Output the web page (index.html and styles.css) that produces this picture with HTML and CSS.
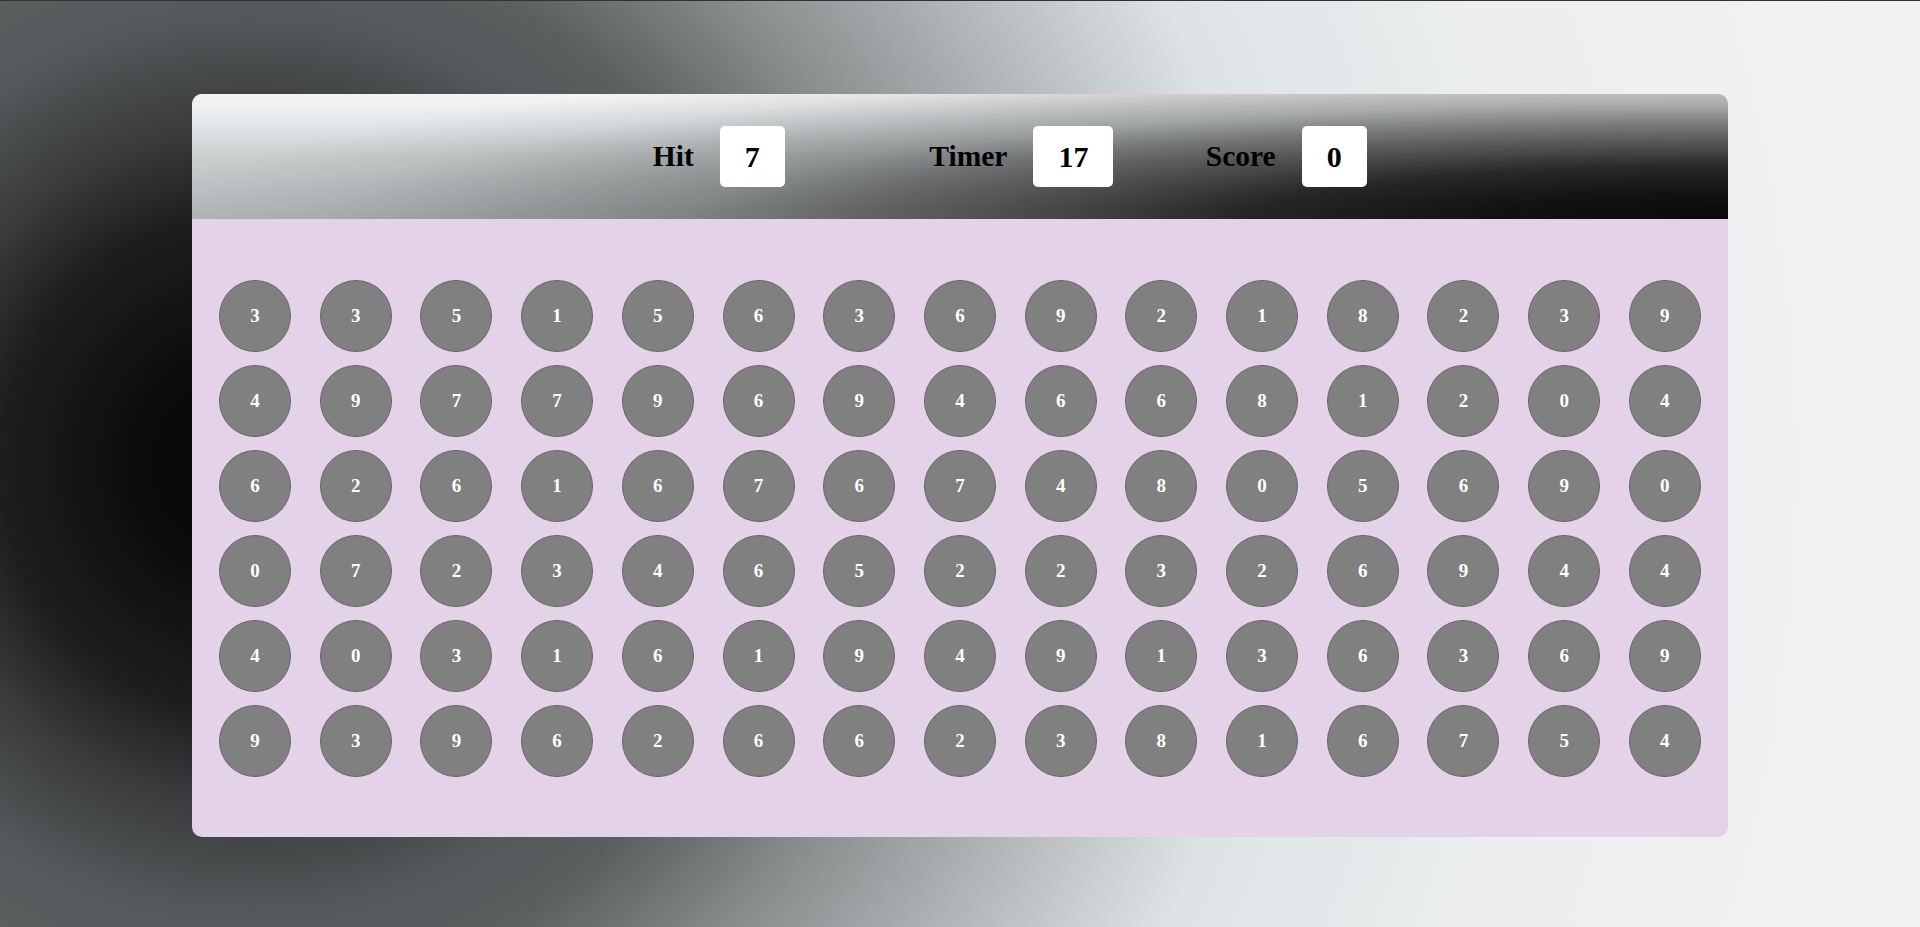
FILE: index.html
```html
<!DOCTYPE html>
<html lang="en">
<head>
<meta charset="UTF-8">
<title>Bubble Game</title>
<link rel="stylesheet" href="styles.css">
</head>
<body>
<main class="main">
  <section class="panel">
    <header class="ptop">
      <div class="elem"><h2 class="label">Hit</h2><div class="box">7</div></div>
      <div class="elem"><h2 class="label">Timer</h2><div class="box">17</div></div>
      <div class="elem"><h2 class="label">Score</h2><div class="box">0</div></div>
    </header>
    <div class="pbtm">
      <div class="bubble">3</div><div class="bubble">3</div><div class="bubble">5</div><div class="bubble">1</div><div class="bubble">5</div><div class="bubble">6</div><div class="bubble">3</div><div class="bubble">6</div><div class="bubble">9</div><div class="bubble">2</div><div class="bubble">1</div><div class="bubble">8</div><div class="bubble">2</div><div class="bubble">3</div><div class="bubble">9</div>
      <div class="bubble">4</div><div class="bubble">9</div><div class="bubble">7</div><div class="bubble">7</div><div class="bubble">9</div><div class="bubble">6</div><div class="bubble">9</div><div class="bubble">4</div><div class="bubble">6</div><div class="bubble">6</div><div class="bubble">8</div><div class="bubble">1</div><div class="bubble">2</div><div class="bubble">0</div><div class="bubble">4</div>
      <div class="bubble">6</div><div class="bubble">2</div><div class="bubble">6</div><div class="bubble">1</div><div class="bubble">6</div><div class="bubble">7</div><div class="bubble">6</div><div class="bubble">7</div><div class="bubble">4</div><div class="bubble">8</div><div class="bubble">0</div><div class="bubble">5</div><div class="bubble">6</div><div class="bubble">9</div><div class="bubble">0</div>
      <div class="bubble">0</div><div class="bubble">7</div><div class="bubble">2</div><div class="bubble">3</div><div class="bubble">4</div><div class="bubble">6</div><div class="bubble">5</div><div class="bubble">2</div><div class="bubble">2</div><div class="bubble">3</div><div class="bubble">2</div><div class="bubble">6</div><div class="bubble">9</div><div class="bubble">4</div><div class="bubble">4</div>
      <div class="bubble">4</div><div class="bubble">0</div><div class="bubble">3</div><div class="bubble">1</div><div class="bubble">6</div><div class="bubble">1</div><div class="bubble">9</div><div class="bubble">4</div><div class="bubble">9</div><div class="bubble">1</div><div class="bubble">3</div><div class="bubble">6</div><div class="bubble">3</div><div class="bubble">6</div><div class="bubble">9</div>
      <div class="bubble">9</div><div class="bubble">3</div><div class="bubble">9</div><div class="bubble">6</div><div class="bubble">2</div><div class="bubble">6</div><div class="bubble">6</div><div class="bubble">2</div><div class="bubble">3</div><div class="bubble">8</div><div class="bubble">1</div><div class="bubble">6</div><div class="bubble">7</div><div class="bubble">5</div><div class="bubble">4</div>
    </div>
  </section>
</main>
</body>
</html>
```
FILE: styles.css
```css
* {
  box-sizing: border-box;
  margin: 0;
  padding: 0;
}

html, body {
  width: 100%;
  height: 100%;
  overflow: hidden;
}

body {
  font-family: "Liberation Serif", "Times New Roman", serif;
}

.main {
  width: 100%;
  height: 927px;
  border-top: 1px solid #303336;
  padding-top: 93px;
  display: flex;
  justify-content: center;
  align-items: flex-start;
  background: radial-gradient(circle 1750px at 250px 50%,
    #080808 0px,
    #0a0a0a 95px,
    #1e1e1e 250px,
    #37393a 332px,
    #55585a 446px,
    #5c5f60 526px,
    #8a8d8e 670px,
    #b8bcbe 864px,
    #dde3e5 1024px,
    #eceeef 1304px,
    #f2f2f2 1700px);
}

.panel {
  width: 80%;
  height: 743px;
  border-radius: 10px;
  overflow: hidden;
  background: #e3d2e8;
  display: flex;
  flex-direction: column;
}

.ptop {
  height: 125px;
  flex: none;
  display: flex;
  align-items: center;
  padding-left: 30%;
  background-image:
    radial-gradient(ellipse 2000px 220px at 100% 100%,
      #0d0d0d 0%,
      #191919 12%,
      #333333 24%,
      #5a5a5a 32%,
      #8c8c8c 44%,
      #b5b5b5 52%,
      #eeeeee 70%,
      #ffffff 80%),
    linear-gradient(to bottom, #f5f5f5 0%, #e4e8ea 22%, #cbcfd0 50%, #b3b7b9 100%);
  background-blend-mode: multiply;
}

.elem {
  width: 276.5px;
  flex: none;
  display: flex;
  align-items: center;
  gap: 26px;
}

.label {
  font-size: 29.5px;
  font-weight: 700;
  color: #000;
  line-height: 35px;
}

.box {
  background: #fff;
  border-radius: 5px;
  padding: 13px 25px;
  font-size: 30px;
  font-weight: 700;
  line-height: 35px;
  color: #000;
}

.pbtm {
  flex: 1;
  display: grid;
  grid-template-columns: repeat(15, 72px);
  grid-auto-rows: 72px;
  justify-content: space-between;
  align-content: center;
  row-gap: 13px;
  padding: 0 27px;
}

.bubble {
  width: 72px;
  height: 72px;
  border-radius: 50%;
  background: #808080;
  border: 1px solid #6b6369;
  display: flex;
  align-items: center;
  justify-content: center;
  color: #fff;
  font-size: 19px;
  font-weight: 700;
}
```
